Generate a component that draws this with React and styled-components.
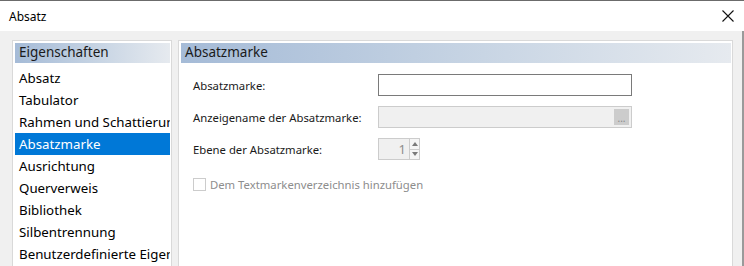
import React from 'react';
import styled, { createGlobalStyle, css } from 'styled-components';

const GlobalStyle = createGlobalStyle`
  html, body {
    margin: 0;
    padding: 0;
    background: #f0f0f0;
  }
  body {
    font-family: "Segoe UI", "Noto Sans", sans-serif;
  }
`;

const Window = styled.div`
  width: 744px;
  height: 266px;
  overflow: hidden;
  display: flex;
  flex-direction: column;
  background: #f0f0f0;
  border-top: 1px solid #6b6b6b;
  box-sizing: border-box;
`;

const TitleBar = styled.div`
  height: 30px;
  flex-shrink: 0;
  background: #ffffff;
  display: flex;
  align-items: center;
  justify-content: space-between;
  padding: 0 10px 0 9px;
  font-size: 12px;
  color: #000;
`;

const Body = styled.div`
  flex: 1;
  display: flex;
  gap: 6px;
  padding: 9px 9px 0 12px;
  border-right: 2px solid #9a9a9a;
  min-height: 0;
`;

const Panel = styled.div`
  box-sizing: border-box;
  background: #ffffff;
  border: 1px solid #d9d9d9;
  border-bottom: none;
  padding: 2px 1px 0 2px;
  display: flex;
  flex-direction: column;
  overflow: hidden;
  ${(p) => p.side === 'left' ? css`
    width: 160px;
    flex-shrink: 0;
  ` : css`
    flex: 1;
  `}
`;

const PanelHeader = styled.div`
  height: 20px;
  line-height: 19px;
  padding-left: 4px;
  font-size: 13.5px;
  color: #1a1a1a;
  white-space: nowrap;
  background: linear-gradient(to right, #a5bbd7 0%, #c8d5e4 55%, #e6eaef 100%);
`;

const List = styled.div`
  display: flex;
  flex-direction: column;
  padding-top: 4px;
`;

const ListItem = styled.div`
  height: 22px;
  line-height: 22px;
  padding-left: 4px;
  font-size: 13.3px;
  white-space: nowrap;
  overflow: hidden;
  color: #000;
  ${(p) => p.selected && css`
    background: #0078d7;
    color: #ffffff;
  `}
`;

const Form = styled.div`
  display: grid;
  grid-template-columns: 185px auto;
  row-gap: 10px;
  align-items: center;
  padding: 11px 0 0 12px;
  justify-content: start;
`;

const Label = styled.div`
  font-size: 11.3px;
  color: #1a1a1a;
  white-space: nowrap;
`;

const TextField = styled.div`
  width: 254px;
  height: 22px;
  box-sizing: border-box;
  border: 1px solid #7a7a7a;
  background: #ffffff;
  ${(p) => p.disabled && css`
    border-color: #cccccc;
    background: #f0f0f0;
    display: flex;
    justify-content: flex-end;
    align-items: center;
    padding-right: 2px;
  `}
`;

const BrowseButton = styled.div`
  width: 15px;
  height: 16px;
  background: #cccccc;
  color: #8a8a8a;
  font-size: 10px;
  line-height: 18px;
  text-align: center;
`;

const Spinner = styled.div`
  display: flex;
  height: 22px;
`;

const SpinValue = styled.div`
  width: 32px;
  box-sizing: border-box;
  border: 1px solid #cccccc;
  background: #f0f0f0;
  color: #8d8d8d;
  font-size: 13px;
  text-align: right;
  padding-right: 3px;
  line-height: 20px;
`;

const SpinArrows = styled.div`
  width: 10px;
  display: flex;
  flex-direction: column;
  border: 1px solid #cccccc;
  border-left: none;
  box-sizing: border-box;
`;

const SpinHalf = styled.div`
  flex: 1;
  display: flex;
  align-items: center;
  justify-content: center;
  background: #f5f5f5;
  ${(p) => p.bottom && css`border-top: 1px solid #cccccc;`}
`;

const CheckRow = styled.div`
  grid-column: 1 / 3;
  display: flex;
  align-items: center;
  gap: 4px;
  margin-top: 7px;
  font-size: 11.3px;
  color: #8d8d8d;
`;

const CheckBox = styled.div`
  width: 13px;
  height: 13px;
  box-sizing: border-box;
  border: 1px solid #cccccc;
  background: #ffffff;
`;

const Arrow = ({ up }) => (
  <svg width="6" height="4" viewBox="0 0 6 4">
    <path d={up ? 'M0 4 L3 0 L6 4 Z' : 'M0 0 L3 4 L6 0 Z'} fill="#7a7a7a" />
  </svg>
);

const CloseIcon = () => (
  <svg width="12" height="12" viewBox="0 0 12 12">
    <path d="M0.5 0.5 L11.5 11.5 M11.5 0.5 L0.5 11.5" stroke="#111" strokeWidth="1.1" />
  </svg>
);

const items = [
  'Absatz',
  'Tabulator',
  'Rahmen und Schattierung',
  'Absatzmarke',
  'Ausrichtung',
  'Querverweis',
  'Bibliothek',
  'Silbentrennung',
  'Benutzerdefinierte Eigenschaften',
];

const App = () => {
  return (
    <Window>
      <GlobalStyle />
      <TitleBar>
        <span>Absatz</span>
        <CloseIcon />
      </TitleBar>
      <Body>
        <Panel side="left">
          <PanelHeader>Eigenschaften</PanelHeader>
          <List>
            {items.map((item) => (
              <ListItem key={item} selected={item === 'Absatzmarke'}>{item}</ListItem>
            ))}
          </List>
        </Panel>
        <Panel side="right">
          <PanelHeader>Absatzmarke</PanelHeader>
          <Form>
            <Label>Absatzmarke:</Label>
            <TextField />
            <Label>Anzeigename der Absatzmarke:</Label>
            <TextField disabled>
              <BrowseButton>...</BrowseButton>
            </TextField>
            <Label>Ebene der Absatzmarke:</Label>
            <Spinner>
              <SpinValue>1</SpinValue>
              <SpinArrows>
                <SpinHalf><Arrow up /></SpinHalf>
                <SpinHalf bottom><Arrow /></SpinHalf>
              </SpinArrows>
            </Spinner>
            <CheckRow>
              <CheckBox />
              Dem Textmarkenverzeichnis hinzufügen
            </CheckRow>
          </Form>
        </Panel>
      </Body>
    </Window>
  );
};

export default App;
